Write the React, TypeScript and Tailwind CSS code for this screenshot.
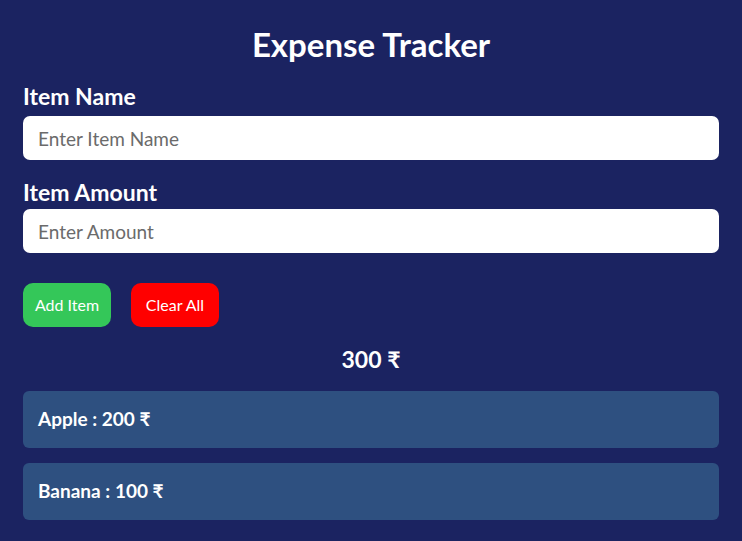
import React, { useState } from 'react';

type Item = { name: string; amount: number };

export default function App() {
  const [items, setItems] = useState<Item[]>([
    { name: 'Apple', amount: 200 },
    { name: 'Banana', amount: 100 },
  ]);
  const [name, setName] = useState('');
  const [amount, setAmount] = useState('');

  const total = items.reduce((sum, i) => sum + i.amount, 0);

  const addItem = () => {
    if (!name || !amount) return;
    setItems([...items, { name, amount: Number(amount) }]);
    setName('');
    setAmount('');
  };

  return (
    <div className="min-h-[541px] bg-[#1b2361] px-[23px] pt-[24px] pb-[20px] text-white font-['Lato','Noto_Sans',sans-serif]">
      <h1 className="text-center text-[33px] font-bold leading-[40px]">Expense Tracker</h1>

      {/* form */}
      <div className="mt-[18px]">
        <label className="block text-[23px] font-bold leading-[28px]">Item Name</label>
        <input
          value={name}
          onChange={(e) => setName(e.target.value)}
          placeholder="Enter Item Name"
          className="mt-[6px] block w-full h-[44px] rounded-[7px] bg-white px-[15px] text-[19px] text-gray-800 placeholder:text-[#6b6b6b] outline-none"
        />
        <label className="mt-[18px] block text-[23px] font-bold leading-[28px]">Item Amount</label>
        <input
          value={amount}
          onChange={(e) => setAmount(e.target.value)}
          placeholder="Enter Amount"
          className="mt-[3px] block w-full h-[44px] rounded-[7px] bg-white px-[15px] text-[19px] text-gray-800 placeholder:text-[#6b6b6b] outline-none"
        />
      </div>

      {/* buttons */}
      <div className="mt-[30px] flex gap-[20px]">
        <button
          onClick={addItem}
          className="h-[44px] w-[88px] rounded-[10px] bg-[#34c759] text-[16px]"
        >
          Add Item
        </button>
        <button
          onClick={() => setItems([])}
          className="h-[44px] w-[88px] rounded-[10px] bg-[#ff0000] text-[16px]"
        >
          Clear All
        </button>
      </div>

      <p className="mt-[18px] text-center text-[23px] font-bold leading-[28px]">{total} ₹</p>

      {/* list */}
      <div className="mt-[18px] flex flex-col gap-[15px]">
        {items.map((item, idx) => (
          <div key={idx} className="h-[57px] rounded-[6px] bg-[#2e5080] px-[15px] flex items-center text-[19px] font-bold">
            {item.name}&nbsp;: {item.amount} ₹
          </div>
        ))}
      </div>
    </div>
  );
}
